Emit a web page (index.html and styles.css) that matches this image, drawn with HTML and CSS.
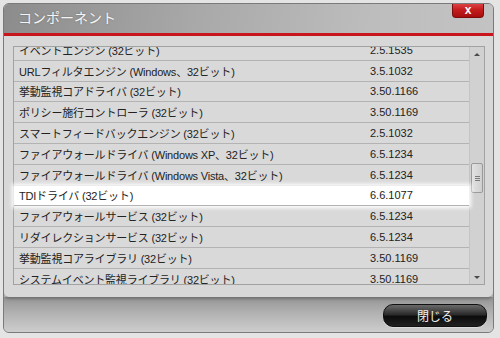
FILE: index.html
```html
<!DOCTYPE html>
<html lang="ja">
<head>
    <meta charset="UTF-8">
    <meta name="viewport" content="width=device-width, initial-scale=1.0">
    <title>コンポーネント</title>
    <link rel="stylesheet" href="styles.css">
</head>
<body>

    <div class="dialog">
        <div class="titlebar">
            <h1 class="title">コンポーネント</h1>
            <button class="close" type="button">x</button>
        </div>

        <div class="panel">
            <div class="list">
                <div class="rows">
                    <div class="rows-inner">
                        <div class="row"><span class="name">イベントエンジン (32ビット)</span><span class="ver">2.5.1535</span></div>
                        <div class="row"><span class="name">URLフィルタエンジン (Windows、32ビット)</span><span class="ver">3.5.1032</span></div>
                        <div class="row"><span class="name">挙動監視コアドライバ (32ビット)</span><span class="ver">3.50.1166</span></div>
                        <div class="row"><span class="name">ポリシー施行コントローラ (32ビット)</span><span class="ver">3.50.1169</span></div>
                        <div class="row"><span class="name">スマートフィードバックエンジン (32ビット)</span><span class="ver">2.5.1032</span></div>
                        <div class="row"><span class="name">ファイアウォールドライバ (Windows XP、32ビット)</span><span class="ver">6.5.1234</span></div>
                        <div class="row"><span class="name">ファイアウォールドライバ (Windows Vista、32ビット)</span><span class="ver">6.5.1234</span></div>
                        <div class="row selected"><span class="name">TDIドライバ (32ビット)</span><span class="ver">6.6.1077</span></div>
                        <div class="row"><span class="name">ファイアウォールサービス (32ビット)</span><span class="ver">6.5.1234</span></div>
                        <div class="row"><span class="name">リダイレクションサービス (32ビット)</span><span class="ver">6.5.1234</span></div>
                        <div class="row"><span class="name">挙動監視コアライブラリ (32ビット)</span><span class="ver">3.50.1169</span></div>
                        <div class="row"><span class="name">システムイベント監視ライブラリ (32ビット)</span><span class="ver">3.50.1169</span></div>
                    </div>
                </div>
                <div class="scrollbar">
                    <span class="arrow up"></span>
                    <div class="track"><div class="thumb"></div></div>
                    <span class="arrow down"></span>
                </div>
            </div>
        </div>

        <div class="footer">
            <button class="btn" type="button">閉じる</button>
        </div>
    </div>

</body>
</html>
```

FILE: styles.css
```css
body {
    margin: 0;
    padding: 0;
    background-color: #e4e4e4;
    font-family: "Liberation Sans", "Noto Sans CJK JP", sans-serif;
    color: #222;
}
.dialog {
    box-sizing: border-box;
    width: 491px;
    height: 330px;
    margin: 3px 0 0 3px;
    border: 1px solid #7a7a7a;
    border-radius: 6px;
    overflow: hidden;
    display: flex;
    flex-direction: column;
    background-color: #c8c8c8;
}
.titlebar {
    height: 29px;
    flex: 0 0 auto;
    display: flex;
    justify-content: space-between;
    align-items: flex-start;
    background: linear-gradient(100deg, #8c8c8c 0%, #a9a9a9 40%, #bdbdbd 75%, #c3c3c3 100%);
    border-bottom: 3px solid #c8161c;
}
.title {
    margin: 0;
    padding-left: 14px;
    font-size: 14px;
    font-weight: normal;
    line-height: 29px;
    color: #f4f4f4;
    text-shadow: 0 0 2px rgba(0, 0, 0, 0.25);
}
.close {
    width: 32px;
    height: 15px;
    margin: -1px 9px 0 0;
    padding: 0;
    border: 1px solid #7c0c0c;
    border-top: none;
    border-radius: 0 0 4px 4px;
    background: linear-gradient(#e0484a, #c41c1c 50%, #a80e0e 100%);
    color: #fff;
    font-family: "Liberation Sans", sans-serif;
    font-size: 12px;
    font-weight: bold;
    line-height: 12px;
}
.panel {
    flex: 0 0 auto;
    height: 261px;
    box-sizing: border-box;
    padding: 10px 8px 0 9px;
    background-color: #d8d8d8;
    border-radius: 0 0 5px 5px;
    box-shadow: 0 2px 3px rgba(0, 0, 0, 0.25);
    position: relative;
    z-index: 1;
}
.list {
    height: 239px;
    box-sizing: border-box;
    border: 1px solid #a2a2a2;
    display: flex;
    background-color: #d9d9d9;
}
.rows {
    flex: 1;
    clip-path: inset(0 -12px 0 -12px);
}
.rows-inner {
    margin-top: -7px;
}
.row {
    box-sizing: border-box;
    height: 20.8px;
    display: flex;
    align-items: center;
    border-bottom: 1px solid #b3b3b3;
    font-size: 11px;
    letter-spacing: -0.2px;
}
.row .name {
    flex: 0 0 351px;
    padding-left: 5px;
    white-space: nowrap;
}
.row .ver {
    letter-spacing: 0;
}
.row.selected {
    position: relative;
    background-color: #fff;
    box-shadow: 0 0 4px 2px #fff;
}
.scrollbar {
    width: 15px;
    flex: 0 0 15px;
    display: flex;
    flex-direction: column;
    background-color: #d1d1d1;
    border-left: 1px solid #c4c4c4;
    box-sizing: border-box;
}
.arrow {
    height: 14px;
    flex: 0 0 14px;
    display: flex;
    align-items: center;
    justify-content: center;
}
.arrow::before {
    content: "";
    border-left: 3px solid transparent;
    border-right: 3px solid transparent;
}
.arrow.up::before {
    border-bottom: 3px solid #4a4a4a;
}
.arrow.down::before {
    border-top: 3px solid #4a4a4a;
}
.track {
    flex: 1;
}
.thumb {
    height: 30px;
    margin: 102px 1px 0 1px;
    box-sizing: border-box;
    border: 1px solid #9a9a9a;
    border-radius: 2px;
    background: linear-gradient(to right, #e2e2e2, #cfcfcf);
    display: flex;
    align-items: center;
    justify-content: center;
}
.thumb::after {
    content: "";
    width: 5px;
    height: 5px;
    background: repeating-linear-gradient(#7a7a7a 0 1px, transparent 1px 2px);
}
.footer {
    flex: 1;
    display: flex;
    justify-content: flex-end;
    align-items: flex-start;
    padding: 7px 6px 0 0;
    background: linear-gradient(#959595, #b4b4b4 50%, #cdcdcd 100%);
}
.btn {
    width: 104px;
    height: 23px;
    padding: 0;
    border: 1px solid #111;
    border-radius: 10px;
    background: linear-gradient(#6a6a6a 0%, #2c2c2c 45%, #0c0c0c 55%, #202020 100%);
    color: #f2f2f2;
    font-family: "Noto Sans CJK JP", sans-serif;
    font-size: 12px;
    line-height: 21px;
    box-shadow: 0 1px 1px rgba(255, 255, 255, 0.4);
}
```
